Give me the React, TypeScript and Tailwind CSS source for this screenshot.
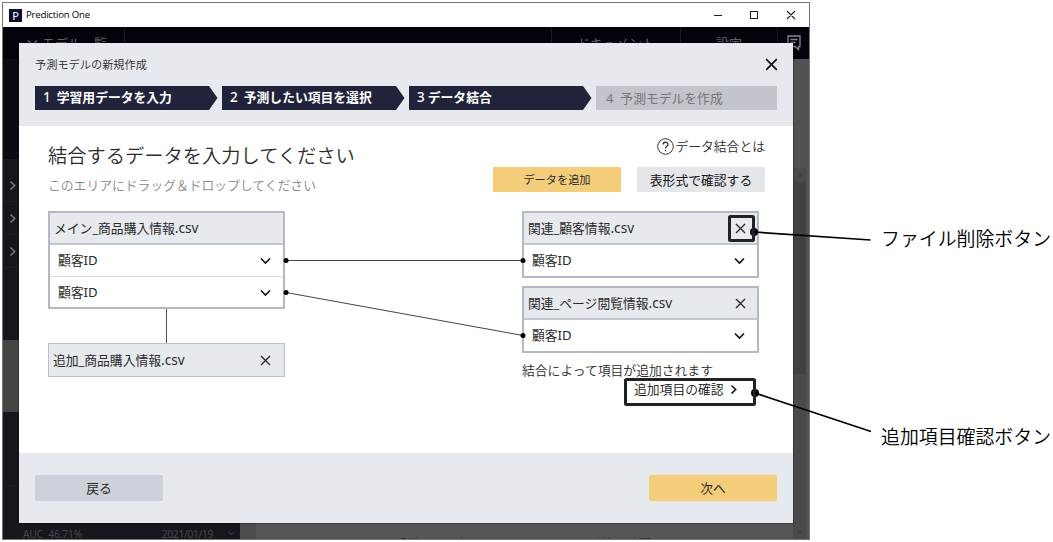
import React from "react";

const cross = "M1 1 L10 10 M10 1 L1 10";

function Cross({ className = "" }: { className?: string }) {
  return (
    <svg viewBox="0 0 11 11" className={`shrink-0 ${className}`} fill="none" stroke="currentColor" strokeWidth="1.4">
      <path d={cross} />
    </svg>
  );
}

function Chevron({ className = "h-2 w-[11px]", d = "M1 1.5 L5.5 6 L10 1.5" }: { className?: string; d?: string }) {
  return (
    <svg viewBox="0 0 11 8" className={`shrink-0 ${className}`} fill="none" stroke="currentColor" strokeWidth="1.6">
      <path d={d} />
    </svg>
  );
}

function ChevronRight({ className = "" }: { className?: string }) {
  return (
    <svg viewBox="0 0 8 11" className={`h-[11px] w-2 shrink-0 ${className}`} fill="none" stroke="currentColor" strokeWidth="1.6">
      <path d="M1.5 1.5 L5.7 5.5 L1.5 9.5" />
    </svg>
  );
}

function FileName({ name }: { name: string }) {
  return (
    <span className="flex items-baseline">
      {name}
      <span className="text-[13.6px]">.csv</span>
    </span>
  );
}

function Step({ n, label, gap }: { n: string; label: string; gap: string }) {
  return (
    <div className="relative flex h-6 w-[183px] items-center">
      <svg viewBox="0 0 183 24" className="absolute inset-0 h-6 w-[183px]">
        <path d="M0 0 H174 L182.5 12 L174 24 H0 Z" fill="#20233a" />
      </svg>
      <span className={`relative flex items-baseline pl-2 text-[12.8px] font-bold text-white ${gap}`}>
        <span className="text-[13.5px] font-medium">{n}</span>
        <span>{label}</span>
      </span>
    </div>
  );
}

function KeyRow() {
  return (
    <div className="flex h-8 items-center justify-between pr-3 pl-2">
      <span className="-mt-px">顧客<span className="text-[13.2px]">ID</span></span>
      <Chevron className="h-2 w-[11px] text-[#111]" />
    </div>
  );
}

function Related({ name }: { name: string }) {
  return (
    <div className="h-[67px] border-2 border-[#b3b9c4] bg-white">
      <div className="flex h-8 items-center justify-between border-b-2 border-[#c3c8d0] bg-[#e6e9ee] pr-[11px] pl-1">
        <FileName name={name} />
        <Cross className="size-[11px]" />
      </div>
      <KeyRow />
    </div>
  );
}

function Backdrop() {
  return (
    <div className="flex h-[512px] flex-col">
      <div className="flex h-8 shrink-0 bg-[#02030b] text-[13px] text-[#606167]">
        <div className="flex w-[122px] items-center gap-1 border-r border-[#191a20] pl-6">
          <Chevron />
          <span>モデル一覧</span>
        </div>
        <div className="flex-1" />
        <div className="flex w-[129px] items-center justify-center border-l border-[#191a20]">ドキュメント</div>
        <div className="flex w-[97px] items-center justify-center border-l border-[#191a20]">設定</div>
        <div className="flex w-[32px] items-center justify-center border-l border-[#191a20]">
          <svg viewBox="0 0 14 16" className="h-4 w-[14px]" fill="none" stroke="#85868a" strokeWidth="1.3">
            <path d="M1 1 H13 V11.5 H11.5 V14.5 L8 11.5 H1 Z M3.5 4.5 H10.5 M3.5 7.5 H8.5" />
          </svg>
        </div>
      </div>
      <div className="flex min-h-0 flex-1">
        <div className="flex w-[237px] shrink-0 flex-col bg-[#15171c] text-[#77787b]">
          <div className="h-[100px] shrink-0 bg-[#090c13]" />
          <div className="flex h-[43px] shrink-0 items-center border-b border-[#1e1f23] pt-[10px] pl-[6px]"><ChevronRight /></div>
          <div className="flex h-[33px] shrink-0 items-center border-b border-[#1e1f23] pl-[6px]"><ChevronRight /></div>
          <div className="flex h-[33px] shrink-0 items-center border-b border-[#1e1f23] pl-[6px]"><ChevronRight /></div>
          <div className="mt-[72px] h-[72px] shrink-0 bg-[#454545]" />
          <div className="mt-[73px] flex border-t border-[#1e1f23] pt-[43px] pr-[5px] pl-5 text-[10.2px] text-[#47484c]">
            <span className="tracking-[-0.1px]">AUC&nbsp; 46.71%</span>
            <span className="ml-auto -mr-[3px] tracking-[-0.3px]">2021/01/19</span>
            <Chevron className="mt-[2px] ml-[18px] h-[5px] w-[7px]" />
          </div>
        </div>
        <div className="flex w-4 bg-[#4b4b4b]" />
        <div className="flex flex-1 items-end overflow-hidden bg-[#555]">
          <span className="-mb-[13px] ml-[137px] text-[13px] leading-4 whitespace-nowrap text-[#272727]">
            「学習」を行う項目について、予測値を確認します
          </span>
        </div>
        <div className="flex w-[13px] flex-col items-center bg-[#4a4a4c] text-[#333]">
          <div className="h-[109px] w-full shrink-0 bg-[#505253]" />
          <Chevron d="M1 6 L5.5 2 L10 6" className="mt-[6px] mb-[4px] h-[4px] w-[6px]" />
          <div className="h-[192px] w-full bg-[#414143]" />
          <Chevron className="mt-auto mb-[5px] h-[4px] w-[6px]" />
        </div>
        <div className="w-[3px] bg-[#505253]" />
      </div>
    </div>
  );
}

export default function App() {
  return (
    <div className="relative h-[542px] w-[1053px] overflow-hidden bg-white pt-[2px] pl-[2px] font-['Noto_Sans','Noto_Sans_CJK_JP',sans-serif] leading-none text-[#2b2b2b]">
      <div className="h-[538px] w-[808px] overflow-hidden border border-[#777] bg-white">
        <div className="flex h-6 items-center pl-[6px]">
          <span className="flex size-[13px] items-center justify-center bg-[#0a0d2c] text-[11px] text-white">P</span>
          <span className="ml-1 font-['Open_Sans','Noto_Sans'] text-[9.6px] tracking-[-0.2px] text-black">Prediction One</span>
          <svg viewBox="0 0 84 12" className="mr-3 ml-auto h-3 w-[84px]" fill="none" stroke="#222" strokeWidth="1.1">
            <path d="M1 6.5 H9 M37.5 2.5 H44.5 V9.5 H37.5 Z M74 2 L82 10 M82 2 L74 10" />
          </svg>
        </div>
        <Backdrop />
      </div>

      <main className="absolute top-[43px] left-[19px] flex h-[480px] w-[774px] flex-col bg-white shadow-[0_0_0_1px_#0004]">
        <header className="h-[83px] shrink-0 bg-[#e6e9ee] px-4">
          <div className="flex h-[43px] items-center justify-between text-[11.2px]">
            <span className="font-[350]">予測モデルの新規作成</span>
            <Cross className="-mr-px size-[13px] text-[#111]" />
          </div>
          <div className="flex gap-1">
            <Step n="1" label="学習用データを入力" gap="gap-[6px]" />
            <Step n="2" label="予測したい項目を選択" gap="gap-[6px]" />
            <Step n="3" label="データ結合" gap="gap-[3px]" />
            <div className="flex h-6 w-[181px] items-center gap-[7px] bg-[#c2c5cb] pl-[10px] text-[12.8px] text-[#747679]">
              <span>4</span>
              <span>予測モデルを作成</span>
            </div>
          </div>
        </header>

        <section className="flex flex-1 flex-col">
          <div className="flex h-[85px] shrink-0 justify-between pr-7 pl-[29px]">
            <div>
              <h1 className="mt-5 text-[19.25px] leading-5 font-[350]">結合するデータを入力してください</h1>
              <p className="mt-3 text-[12.8px] leading-[14px] font-[350] text-[#888]">このエリアにドラッグ＆ドロップしてください</p>
            </div>
            <div className="flex flex-col items-end">
              <div className="mt-3 flex h-[17px] items-center gap-[2px] text-[12.8px]">
                <svg viewBox="0 0 17 17" className="size-[17px] overflow-visible" fill="none" stroke="#333">
                  <circle cx="9.5" cy="8.5" r="7.8" />
                  <path d="M7 6.6 C7.1 3.5 12 3.5 12 6.5 C12 8.3 9.5 8.4 9.5 10.5 M9.5 11.8 V13.2" strokeWidth="1.3" />
                </svg>
                <span className="font-[350]">データ結合とは</span>
              </div>
              <div className="mt-3 flex gap-4">
                <button className="h-[25px] w-32 rounded-[1px] bg-[#f3cd79] pt-px text-[11.2px]">データを追加</button>
                <button className="h-[25px] w-32 rounded-[1px] bg-[#e5e6e9] pt-px text-[12.8px] text-[#111]">表形式で確認する</button>
              </div>
            </div>
          </div>

          <div className="flex justify-between pr-[34px] pl-[29px] text-[12.8px]">
            <div className="w-[237px]">
              <div className="h-[98px] border-2 border-[#b3b9c4] bg-white">
                <div className="flex h-8 items-center border-b-2 border-[#c3c8d0] bg-[#e6e9ee] pl-[4px]">
                  <FileName name="メイン_商品購入情報" />
                </div>
                <KeyRow />
                <div className="-mt-px border-t border-[#ddd]"><KeyRow /></div>
              </div>
              <div className="ml-[118px] h-[34px] w-px bg-[#555]" />
              <div className="flex h-[34px] items-center justify-between border border-[#b9bfc9] bg-[#e6e9ee] pr-[13px] pl-1">
                <FileName name="追加_商品購入情報" />
                <Cross className="size-[11px]" />
              </div>
            </div>
            <div className="w-[237px]">
              <Related name="関連_顧客情報" />
              <div className="h-2" />
              <Related name="関連_ページ閲覧情報" />
              <p className="mt-[10px] leading-[15px] font-[350]">結合によって項目が追加されます</p>
              <div className="mt-[5px] ml-[112px] flex items-center gap-[6px] text-[#111]">
                <span className="font-[350]">追加項目の確認</span>
                <ChevronRight />
              </div>
            </div>
          </div>
        </section>

        <footer className="flex h-[70px] shrink-0 items-center justify-between bg-[#e6e9ee] px-4 text-[12.8px]">
          <button className="h-[26px] w-32 rounded-[2px] bg-[#cdd1d9] pt-px">戻る</button>
          <button className="h-[26px] w-32 rounded-[2px] bg-[#f3cd79] pt-px">次へ</button>
        </footer>
      </main>

      <svg viewBox="0 0 1053 542" className="pointer-events-none absolute inset-0 h-[542px] w-[1053px]" fill="none">
        <path d="M286 260.5 H523 M286 292.5 L523 335.5" stroke="#444" />
        <g fill="#000">
          <circle cx="286" cy="260.5" r="2.5" />
          <circle cx="286" cy="292.5" r="2.5" />
          <circle cx="523" cy="260.5" r="2.5" />
          <circle cx="523" cy="335.5" r="2.5" />
          <circle cx="754" cy="232" r="4" />
          <circle cx="755" cy="393" r="4" />
        </g>
        <g stroke="#202224" strokeWidth="3">
          <rect x="729.5" y="216.5" width="24" height="24" rx="1" />
          <rect x="625.5" y="379.5" width="129" height="25" rx="1" />
        </g>
        <path d="M754 232 L870.5 240 M755 393 L871 431.5" stroke="#000" strokeWidth="1.7" />
      </svg>
      <span className="absolute top-[229px] left-[881px] text-[18.9px] leading-5 font-[350] whitespace-nowrap text-black">ファイル削除ボタン</span>
      <span className="absolute top-[427px] left-[881px] text-[18.9px] leading-5 font-[350] whitespace-nowrap text-black">追加項目確認ボタン</span>
    </div>
  );
}
